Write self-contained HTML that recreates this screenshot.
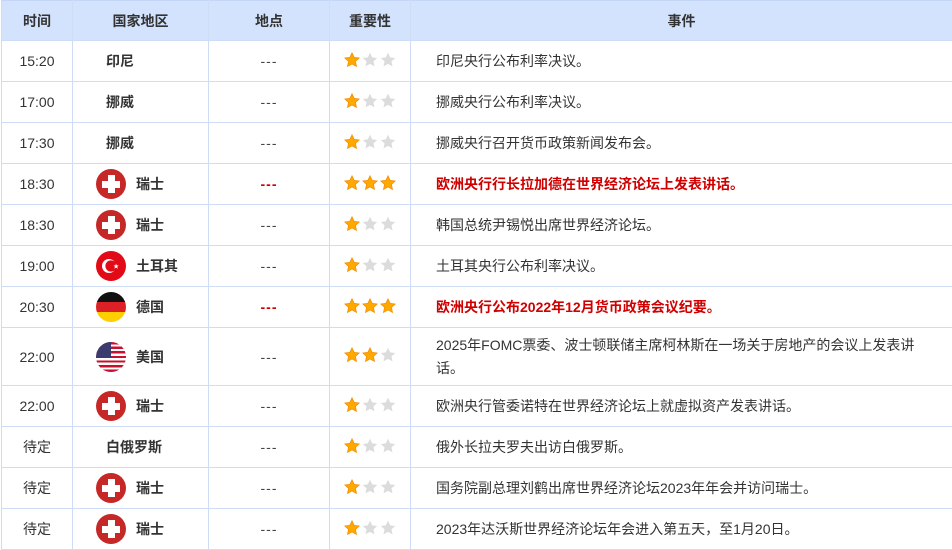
<!DOCTYPE html>
<html><head><meta charset="utf-8"><style>
*{margin:0;padding:0;box-sizing:border-box}
body{width:952px;height:549px;overflow:hidden;background:#fff;font-family:"Liberation Sans","Microsoft YaHei","Noto Sans CJK SC",sans-serif;font-size:14px;color:#333}
table{border-collapse:collapse;position:absolute;left:1px;top:0;width:951px;table-layout:fixed}
td,th{border:1px solid #cfdcf5;text-align:center;vertical-align:middle;padding:0}
tr{height:41px}
th{background:#d3e3fd;height:40px;font-weight:bold;font-size:14px;color:#333;border-top:1px solid #c3d6f5}
tr.h{height:40px}
tr td:last-child,tr th:last-child{border-right:none}
td.ev{text-align:left;padding-left:25px;padding-right:30px;line-height:23px}
td.ev.r{color:#d00000;font-weight:bold}
td.c{text-align:left;padding-left:33px;font-weight:bold}
td.c.f{padding-left:23px}
.fl{display:inline-block;width:30px;height:30px;border-radius:50%;vertical-align:middle;margin-right:10px;overflow:hidden;position:relative}
.c span{vertical-align:middle}
.ch{background:#c62828}
.ch:before{content:"";position:absolute;left:6px;top:11.5px;width:18px;height:7px;background:#fff}
.ch:after{content:"";position:absolute;left:11.5px;top:6px;width:7px;height:18px;background:#fff}
.tr{background:#e30a17}
.de{background:linear-gradient(#111 0 33%,#dd1f26 33% 66%,#ffce00 66%)}
.us{background:repeating-linear-gradient(#c8102e 0 2.3px,#fff 2.3px 4.6px)}
.us:before{content:"";position:absolute;left:0;top:0;width:15px;height:16px;background:#3c3b6e}
.st{display:inline-block;width:16px;height:16px;margin-right:2px;vertical-align:middle;position:relative;top:-2px}
.s{text-align:left;padding-left:14px}
.dash{letter-spacing:1px;color:#444}
.rd{color:#c00;font-weight:bold}
</style></head><body>
<svg width="0" height="0" style="position:absolute"><defs>
<symbol id="y" viewBox="0 0 16 16"><path d="M8 .8l2.2 4.6 5 .6-3.7 3.4 1 5L8 11.9 3.5 14.4l1-5L.8 6l5-.6z" fill="#ffa800" stroke="#f08c00" stroke-width=".7"/></symbol>
<symbol id="g" viewBox="0 0 16 16"><path d="M8 .8l2.2 4.6 5 .6-3.7 3.4 1 5L8 11.9 3.5 14.4l1-5L.8 6l5-.6z" fill="#dcdcdc"/></symbol>
</defs></svg>
<table>
<colgroup><col style="width:71px"><col style="width:136px"><col style="width:121px"><col style="width:81px"><col></colgroup>
<tr class="h"><th>时间</th><th>国家地区</th><th>地点</th><th>重要性</th><th>事件</th></tr>
<tr><td>15:20</td><td class="c">印尼</td><td class="dash">---</td><td class="s"><svg class="st"><use href="#y"/></svg><svg class="st"><use href="#g"/></svg><svg class="st"><use href="#g"/></svg></td><td class="ev">印尼央行公布利率决议。</td></tr>
<tr><td>17:00</td><td class="c">挪威</td><td class="dash">---</td><td class="s"><svg class="st"><use href="#y"/></svg><svg class="st"><use href="#g"/></svg><svg class="st"><use href="#g"/></svg></td><td class="ev">挪威央行公布利率决议。</td></tr>
<tr><td>17:30</td><td class="c">挪威</td><td class="dash">---</td><td class="s"><svg class="st"><use href="#y"/></svg><svg class="st"><use href="#g"/></svg><svg class="st"><use href="#g"/></svg></td><td class="ev">挪威央行召开货币政策新闻发布会。</td></tr>
<tr><td>18:30</td><td class="c f"><i class="fl ch"></i><span>瑞士</span></td><td class="dash rd">---</td><td class="s"><svg class="st"><use href="#y"/></svg><svg class="st"><use href="#y"/></svg><svg class="st"><use href="#y"/></svg></td><td class="ev r">欧洲央行行长拉加德在世界经济论坛上发表讲话。</td></tr>
<tr><td>18:30</td><td class="c f"><i class="fl ch"></i><span>瑞士</span></td><td class="dash">---</td><td class="s"><svg class="st"><use href="#y"/></svg><svg class="st"><use href="#g"/></svg><svg class="st"><use href="#g"/></svg></td><td class="ev">韩国总统尹锡悦出席世界经济论坛。</td></tr>
<tr><td>19:00</td><td class="c f"><i class="fl tr"><svg width="30" height="30" style="position:absolute;left:0;top:0"><circle cx="13" cy="15" r="7" fill="#fff"/><circle cx="15" cy="15" r="5.6" fill="#e30a17"/><path d="M20 12.5l.8 2 2-.1-1.6 1.3.7 2-1.8-1.2-1.8 1.2.7-2-1.6-1.3 2 .1z" fill="#fff"/></svg></i><span>土耳其</span></td><td class="dash">---</td><td class="s"><svg class="st"><use href="#y"/></svg><svg class="st"><use href="#g"/></svg><svg class="st"><use href="#g"/></svg></td><td class="ev">土耳其央行公布利率决议。</td></tr>
<tr><td>20:30</td><td class="c f"><i class="fl de"></i><span>德国</span></td><td class="dash rd">---</td><td class="s"><svg class="st"><use href="#y"/></svg><svg class="st"><use href="#y"/></svg><svg class="st"><use href="#y"/></svg></td><td class="ev r">欧洲央行公布2022年12月货币政策会议纪要。</td></tr>
<tr style="height:58px"><td>22:00</td><td class="c f"><i class="fl us"></i><span>美国</span></td><td class="dash">---</td><td class="s"><svg class="st"><use href="#y"/></svg><svg class="st"><use href="#y"/></svg><svg class="st"><use href="#g"/></svg></td><td class="ev">2025年FOMC票委、波士顿联储主席柯林斯在一场关于房地产的会议上发表讲话。</td></tr>
<tr><td>22:00</td><td class="c f"><i class="fl ch"></i><span>瑞士</span></td><td class="dash">---</td><td class="s"><svg class="st"><use href="#y"/></svg><svg class="st"><use href="#g"/></svg><svg class="st"><use href="#g"/></svg></td><td class="ev">欧洲央行管委诺特在世界经济论坛上就虚拟资产发表讲话。</td></tr>
<tr><td>待定</td><td class="c">白俄罗斯</td><td class="dash">---</td><td class="s"><svg class="st"><use href="#y"/></svg><svg class="st"><use href="#g"/></svg><svg class="st"><use href="#g"/></svg></td><td class="ev">俄外长拉夫罗夫出访白俄罗斯。</td></tr>
<tr><td>待定</td><td class="c f"><i class="fl ch"></i><span>瑞士</span></td><td class="dash">---</td><td class="s"><svg class="st"><use href="#y"/></svg><svg class="st"><use href="#g"/></svg><svg class="st"><use href="#g"/></svg></td><td class="ev">国务院副总理刘鹤出席世界经济论坛2023年年会并访问瑞士。</td></tr>
<tr><td>待定</td><td class="c f"><i class="fl ch"></i><span>瑞士</span></td><td class="dash">---</td><td class="s"><svg class="st"><use href="#y"/></svg><svg class="st"><use href="#g"/></svg><svg class="st"><use href="#g"/></svg></td><td class="ev">2023年达沃斯世界经济论坛年会进入第五天，至1月20日。</td></tr>
</table>
</body></html>
